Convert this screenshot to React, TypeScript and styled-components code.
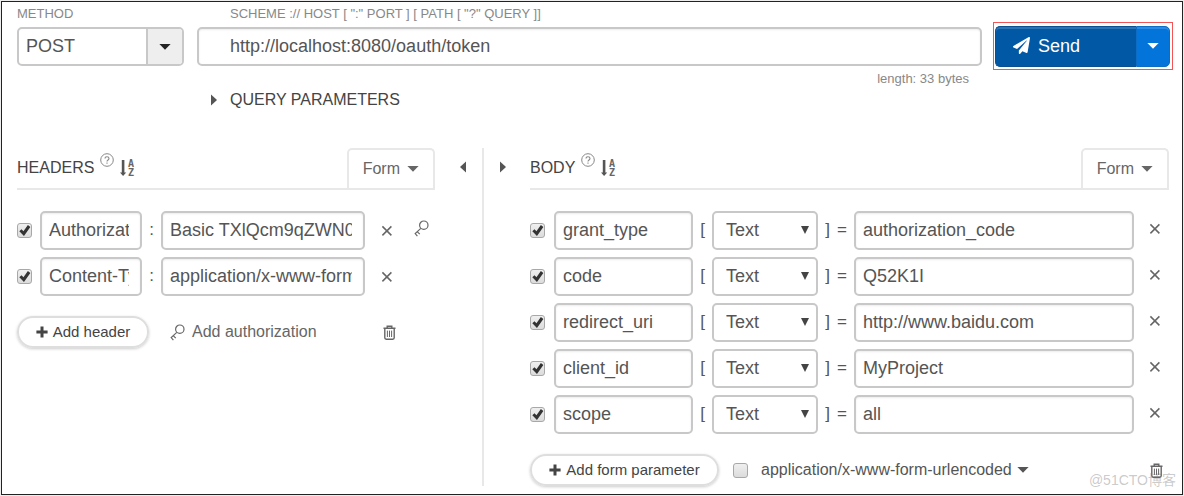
import React from "react";
import styled, { createGlobalStyle } from "styled-components";
import { FaPaperPlane } from "react-icons/fa";

const GlobalStyle = createGlobalStyle`
  * { box-sizing: border-box; }
  body {
    margin: 0;
    background: #ededed;
    color: #555;
    font-family: "Liberation Sans", Arial, "Noto Sans CJK SC", sans-serif;
    font-size: 16px;
    line-height: 20px;
  }
  button, input, select {
    font: inherit;
    color: inherit;
    margin: 0;
    padding: 0;
    border: 0;
    border-radius: 0;
    background: none;
    outline: 0;
  }
  button { cursor: pointer; }
  svg { display: block; flex: none; }
`;

const Frame = styled.main`
  position: relative;
  margin: 1px;
  border: 1px solid #222;
  background: #fff;
`;

const RequestBar = styled.section`
  display: grid;
  grid-template-columns: 167px minmax(0, 1fr) 180px;
  padding: 3px 9px 0 15px;
`;

const MethodColumn = styled.div`
  display: flex;
  flex-direction: column;
`;

const UrlColumn = styled.div`
  display: flex;
  flex-direction: column;
  padding: 0 11px 0 13px;
`;

const Caption = styled.label<{ $indent?: boolean }>`
  padding-left: ${(p) => (p.$indent ? 33 : 0)}px;
  margin-bottom: 4px;
  color: #888;
  font-size: 13px;
  line-height: 18px;
`;

const MethodBox = styled.div`
  display: flex;
  position: relative;
  height: 39px;
  border: 2px solid #c8c8c8;
  border-radius: 5px;
  overflow: hidden;
`;

const MethodSelect = styled.select`
  flex: 1;
  appearance: none;
  padding: 0 42px 1px 7px;
  font-size: 18px;
`;

const MethodArrow = styled.span`
  position: absolute;
  top: 0;
  right: 0;
  bottom: 0;
  width: 36px;
  display: grid;
  place-items: center;
  border-left: 2px solid #c8c8c8;
  background: #eee;
  color: #222;
  pointer-events: none;
`;

const Field = styled.input<{ $indent?: boolean }>`
  width: 100%;
  min-width: 0;
  height: 39px;
  padding: 0 11px 1px ${(p) => (p.$indent ? 31 : 7)}px;
  border: 2px solid #c8c8c8;
  border-radius: 5px;
  box-shadow: inset 0 1px 2px rgba(0, 0, 0, 0.08);
  background: #fff;
  font-size: 18px;
`;

const LengthNote = styled.p`
  margin: 3px 13px 0 0;
  color: #888;
  font-size: 13px;
  line-height: 20px;
  text-align: right;
`;

const QueryToggle = styled.button`
  display: flex;
  align-items: center;
  align-self: flex-start;
  gap: 13px;
  margin-top: 1px;
  padding-left: 14px;
  color: #444;
`;

const SendOutline = styled.div`
  align-self: start;
  display: flex;
  margin-top: 17px;
  padding: 3px 2px 2px 1px;
  border: 1px solid #f25555;
`;

const SendButton = styled.button`
  flex: 1;
  display: flex;
  align-items: center;
  gap: 8px;
  height: 41px;
  padding: 0 0 2px 17px;
  border: 1px solid #0a4f92;
  border-right: 0;
  border-radius: 5px 0 0 5px;
  box-shadow: inset 0 2px 0 #2b73b3;
  background: #0158a5;
  color: #fff;
  font-size: 18px;
`;

const SendMore = styled.button`
  display: grid;
  place-items: center;
  width: 34px;
  height: 41px;
  padding-bottom: 2px;
  border: 1px solid #0d6cc4;
  border-radius: 0 5px 5px 0;
  box-shadow: inset 0 2px 0 #2a8ae4;
  background: #0274da;
  color: #fff;
`;

const Panels = styled.div`
  display: grid;
  grid-template-columns: minmax(0, 418fr) 95px minmax(0, 639fr);
  padding: 38px 13px 8px 15px;
`;

const Panel = styled.section`
  display: flex;
  flex-direction: column;
`;

const Splitter = styled.div`
  display: grid;
  grid-template-columns: 49px 46px;
`;

const Collapse = styled.button<{ $side: "left" | "right" }>`
  display: flex;
  justify-content: ${(p) => (p.$side === "left" ? "flex-end" : "flex-start")};
  align-items: flex-start;
  padding: 13px 16px 0;
  border-right: ${(p) => (p.$side === "left" ? "2px solid #e8e8e8" : "0")};
  color: #555;
`;

const PanelHead = styled.header`
  display: flex;
  align-items: center;
  height: 42px;
  border-bottom: 2px solid #e8e8e8;
`;

const PanelTitle = styled.h2`
  margin: 0 6px 0 0;
  color: #444;
  font-size: 16px;
  font-weight: 400;
`;

const HeadButton = styled.button<{ $raised?: boolean }>`
  align-self: ${(p) => (p.$raised ? "flex-start" : "center")};
  margin: ${(p) => (p.$raised ? "5px 6px 0 0" : "0")};
`;

const FormTab = styled.button`
  align-self: stretch;
  display: flex;
  align-items: center;
  gap: 7px;
  margin-left: auto;
  padding: 0 14px;
  border: 2px solid #e8e8e8;
  border-bottom: 0;
  border-radius: 5px 5px 0 0;
  color: #666;
`;

const Rows = styled.div`
  display: grid;
  gap: 7px;
  margin-top: 21px;
`;

const HeaderRow = styled.div`
  display: grid;
  grid-template-columns: 23px minmax(0, 102fr) 19px minmax(0, 204fr) 43px 27px;
  align-items: center;
`;

const BodyRow = styled.div`
  display: grid;
  grid-template-columns: 24px minmax(0, 139fr) 19px 106px 36px minmax(0, 280fr) 35px;
  align-items: center;
`;

const Mark = styled.span`
  display: flex;
  justify-content: center;
  gap: 7px;
  padding-bottom: 2px;
  font-size: 17px;
`;

const Tick = styled.input`
  appearance: none;
  display: grid;
  place-items: center;
  width: 15px;
  height: 15px;
  border: 1px solid #a8a8a8;
  border-radius: 3px;
  background: linear-gradient(#efefef, #dcdcdc);
  &:checked::before {
    content: "";
    width: 13px;
    height: 13px;
    background: #333;
    clip-path: polygon(10% 55%, 27% 40%, 42% 56%, 76% 8%, 95% 24%, 46% 92%);
  }
`;

const TypeBox = styled.div`
  display: flex;
  position: relative;
`;

const TypeSelect = styled.select`
  appearance: none;
  width: 100%;
  height: 39px;
  padding: 0 26px 1px 12px;
  border: 2px solid #c8c8c8;
  border-radius: 5px;
  background: #fff;
  font-size: 18px;
`;

const TypeArrow = styled.span`
  position: absolute;
  top: 15px;
  right: 9px;
  color: #444;
  pointer-events: none;
`;

const IconButton = styled.button<{ $end?: boolean; $raised?: boolean }>`
  display: grid;
  justify-items: ${(p) => (p.$end ? "end" : "center")};
  padding: 0 ${(p) => (p.$end ? 8 : 0)}px ${(p) => (p.$raised ? 4 : 0)}px 0;
  color: #666;
`;

const Actions = styled.footer`
  display: flex;
  align-items: center;
  margin-top: 20px;
`;

const Pill = styled.button<{ $wide?: boolean }>`
  display: flex;
  align-items: center;
  justify-content: center;
  gap: 5px;
  width: ${(p) => (p.$wide ? 189 : 132)}px;
  height: 32px;
  border: 2px solid #dedede;
  border-radius: 16px;
  box-shadow: 0 1px 3px rgba(0, 0, 0, 0.2);
  color: #444;
  font-size: 15px;
  white-space: nowrap;
`;

const QuietButton = styled.button`
  display: flex;
  align-items: center;
  gap: 7px;
  margin-left: 21px;
  color: #666;
`;

const Encoding = styled.label`
  display: flex;
  align-items: center;
  gap: 13px;
  margin-left: 14px;
  color: #555;
`;

const MenuButton = styled.button`
  margin-left: 5px;
  padding: 4px 0;
  color: #555;
`;

const DeleteButton = styled.button<{ $inset: number }>`
  margin: 0 ${(p) => p.$inset}px 0 auto;
  color: #666;
`;

const Watermark = styled.span`
  position: absolute;
  right: 6px;
  bottom: 4px;
  color: rgba(120, 120, 120, 0.4);
  font-size: 14px;
`;

const Caret = () => (
  <svg width="12" height="6" viewBox="0 0 12 6" aria-hidden="true">
    <path d="M.4 0h11.2L6 5.8z" fill="currentColor" />
  </svg>
);

const SideCaret = ({ flip }: { flip?: boolean }) => (
  <svg width="6" height="12" viewBox="0 0 6 12" aria-hidden="true">
    <path d={flip ? "M6 .4v11.2L0 6z" : "M0 .4v11.2L6 6z"} fill="#555" />
  </svg>
);

const DownTriangle = () => (
  <svg width="8" height="8" viewBox="0 0 8 8" aria-hidden="true">
    <path d="M0 0h8L4 8z" fill="currentColor" />
  </svg>
);

const Plus = () => (
  <svg width="12" height="12" viewBox="0 0 12 12" aria-hidden="true">
    <path d="M6 .4v11.2M.4 6h11.2" stroke="currentColor" strokeWidth="3" />
  </svg>
);

const Cross = () => (
  <svg width="12" height="12" viewBox="0 0 12 12" fill="none" aria-hidden="true">
    <path d="M1.4 1.4l9 9M10.4 1.4l-9 9" stroke="currentColor" strokeWidth="1.5" />
  </svg>
);

const Key = () => (
  <svg width="15" height="17" viewBox="0 0 15 17" fill="none" stroke="currentColor" strokeWidth="1.2" aria-hidden="true">
    <circle cx="9.8" cy="5.2" r="4.2" />
    <path d="M6.8 8.4L1.2 13.6l2.2 2.6M3.4 11.8l2.4 2.4" />
  </svg>
);

const Trash = () => (
  <svg width="13" height="15" viewBox="0 0 13 15" fill="none" stroke="currentColor" aria-hidden="true">
    <path d="M.5 3.2h12M4.2 3V1.2h4.6V3M1.8 3.4v9.4q0 1.4 1.4 1.4h6.6q1.4 0 1.4-1.4V3.4" strokeWidth="1.4" />
    <path d="M4.4 5.6v6.4M6.5 5.6v6.4M8.6 5.6v6.4" strokeWidth="1" />
  </svg>
);

const Help = () => (
  <svg width="14" height="14" viewBox="0 0 14 14" fill="none" stroke="#888" aria-hidden="true">
    <circle cx="7" cy="7" r="6.3" />
    <path d="M5 5.6c0-2.6 4-2.5 4-.1 0 1.4-2 1.5-2 3M7 9.6v1.2" strokeWidth="1.1" />
  </svg>
);

const SortIcon = styled.svg`
  font-family: "DejaVu Sans Mono", monospace;
  font-size: 10px;
  font-weight: 700;
`;

const Sort = () => (
  <SortIcon width="15" height="18" viewBox="0 0 15 18" aria-hidden="true">
    <path d="M1.8 1h2.6v12.4h1.8L3.1 17 0 13.4h1.8z" fill="#555" />
    <text x="8" y="8" fill="#666">A</text>
    <text x="8" y="17" fill="#666">Z</text>
  </SortIcon>
);

const headers = [
  { name: "Authorization", value: "Basic TXlQcm9qZWN0Og==", auth: true },
  { name: "Content-Type", value: "application/x-www-form-urlencoded", auth: false },
];

const params = [
  { name: "grant_type", value: "authorization_code" },
  { name: "code", value: "Q52K1I" },
  { name: "redirect_uri", value: "http://www.baidu.com" },
  { name: "client_id", value: "MyProject" },
  { name: "scope", value: "all" },
];

const Head = ({ title }: { title: string }) => (
  <PanelHead>
    <PanelTitle>{title}</PanelTitle>
    <HeadButton $raised aria-label={`${title} help`}><Help /></HeadButton>
    <HeadButton aria-label={`Sort ${title}`}><Sort /></HeadButton>
    <FormTab>Form <Caret /></FormTab>
  </PanelHead>
);

export default function App() {
  return (
    <>
      <GlobalStyle />
      <Frame>
        <RequestBar>
          <MethodColumn>
            <Caption htmlFor="method">METHOD</Caption>
            <MethodBox>
              <MethodSelect id="method" defaultValue="POST">
                <option>POST</option>
              </MethodSelect>
              <MethodArrow><Caret /></MethodArrow>
            </MethodBox>
          </MethodColumn>
          <UrlColumn>
            <Caption $indent htmlFor="url">{'SCHEME :// HOST [ ":" PORT ] [ PATH [ "?" QUERY ]]'}</Caption>
            <Field $indent id="url" defaultValue="http://localhost:8080/oauth/token" />
            <LengthNote>length: 33 bytes</LengthNote>
            <QueryToggle><SideCaret />QUERY PARAMETERS</QueryToggle>
          </UrlColumn>
          <SendOutline>
            <SendButton><FaPaperPlane size={17} />Send</SendButton>
            <SendMore aria-label="Send options"><Caret /></SendMore>
          </SendOutline>
        </RequestBar>

        <Panels>
          <Panel>
            <Head title="HEADERS" />
            <Rows>
              {headers.map((h) => (
                <HeaderRow key={h.name}>
                  <Tick type="checkbox" defaultChecked aria-label={`Enable ${h.name}`} />
                  <Field aria-label="Header name" defaultValue={h.name} />
                  <Mark>:</Mark>
                  <Field aria-label={`${h.name} value`} defaultValue={h.value} />
                  <IconButton aria-label={`Remove ${h.name}`}><Cross /></IconButton>
                  {h.auth && <IconButton $raised aria-label="Edit authorization"><Key /></IconButton>}
                </HeaderRow>
              ))}
            </Rows>
            <Actions>
              <Pill><Plus />Add header</Pill>
              <QuietButton><Key />Add authorization</QuietButton>
              <DeleteButton $inset={39} aria-label="Delete all headers"><Trash /></DeleteButton>
            </Actions>
          </Panel>

          <Splitter>
            <Collapse $side="left" aria-label="Collapse headers"><SideCaret flip /></Collapse>
            <Collapse $side="right" aria-label="Collapse body"><SideCaret /></Collapse>
          </Splitter>

          <Panel>
            <Head title="BODY" />
            <Rows>
              {params.map((p) => (
                <BodyRow key={p.name}>
                  <Tick type="checkbox" defaultChecked aria-label={`Enable ${p.name}`} />
                  <Field aria-label="Parameter name" defaultValue={p.name} />
                  <Mark>[</Mark>
                  <TypeBox>
                    <TypeSelect aria-label={`${p.name} type`} defaultValue="Text">
                      <option>Text</option>
                    </TypeSelect>
                    <TypeArrow><DownTriangle /></TypeArrow>
                  </TypeBox>
                  <Mark><span>]</span><span>=</span></Mark>
                  <Field aria-label={`${p.name} value`} defaultValue={p.value} />
                  <IconButton $end $raised aria-label={`Remove ${p.name}`}><Cross /></IconButton>
                </BodyRow>
              ))}
            </Rows>
            <Actions>
              <Pill $wide><Plus />Add form parameter</Pill>
              <Encoding>
                <Tick type="checkbox" />
                application/x-www-form-urlencoded
              </Encoding>
              <MenuButton aria-label="Choose encoding"><Caret /></MenuButton>
              <DeleteButton $inset={6} aria-label="Delete all parameters"><Trash /></DeleteButton>
            </Actions>
          </Panel>
        </Panels>
        <Watermark>@51CTO博客</Watermark>
      </Frame>
    </>
  );
}
